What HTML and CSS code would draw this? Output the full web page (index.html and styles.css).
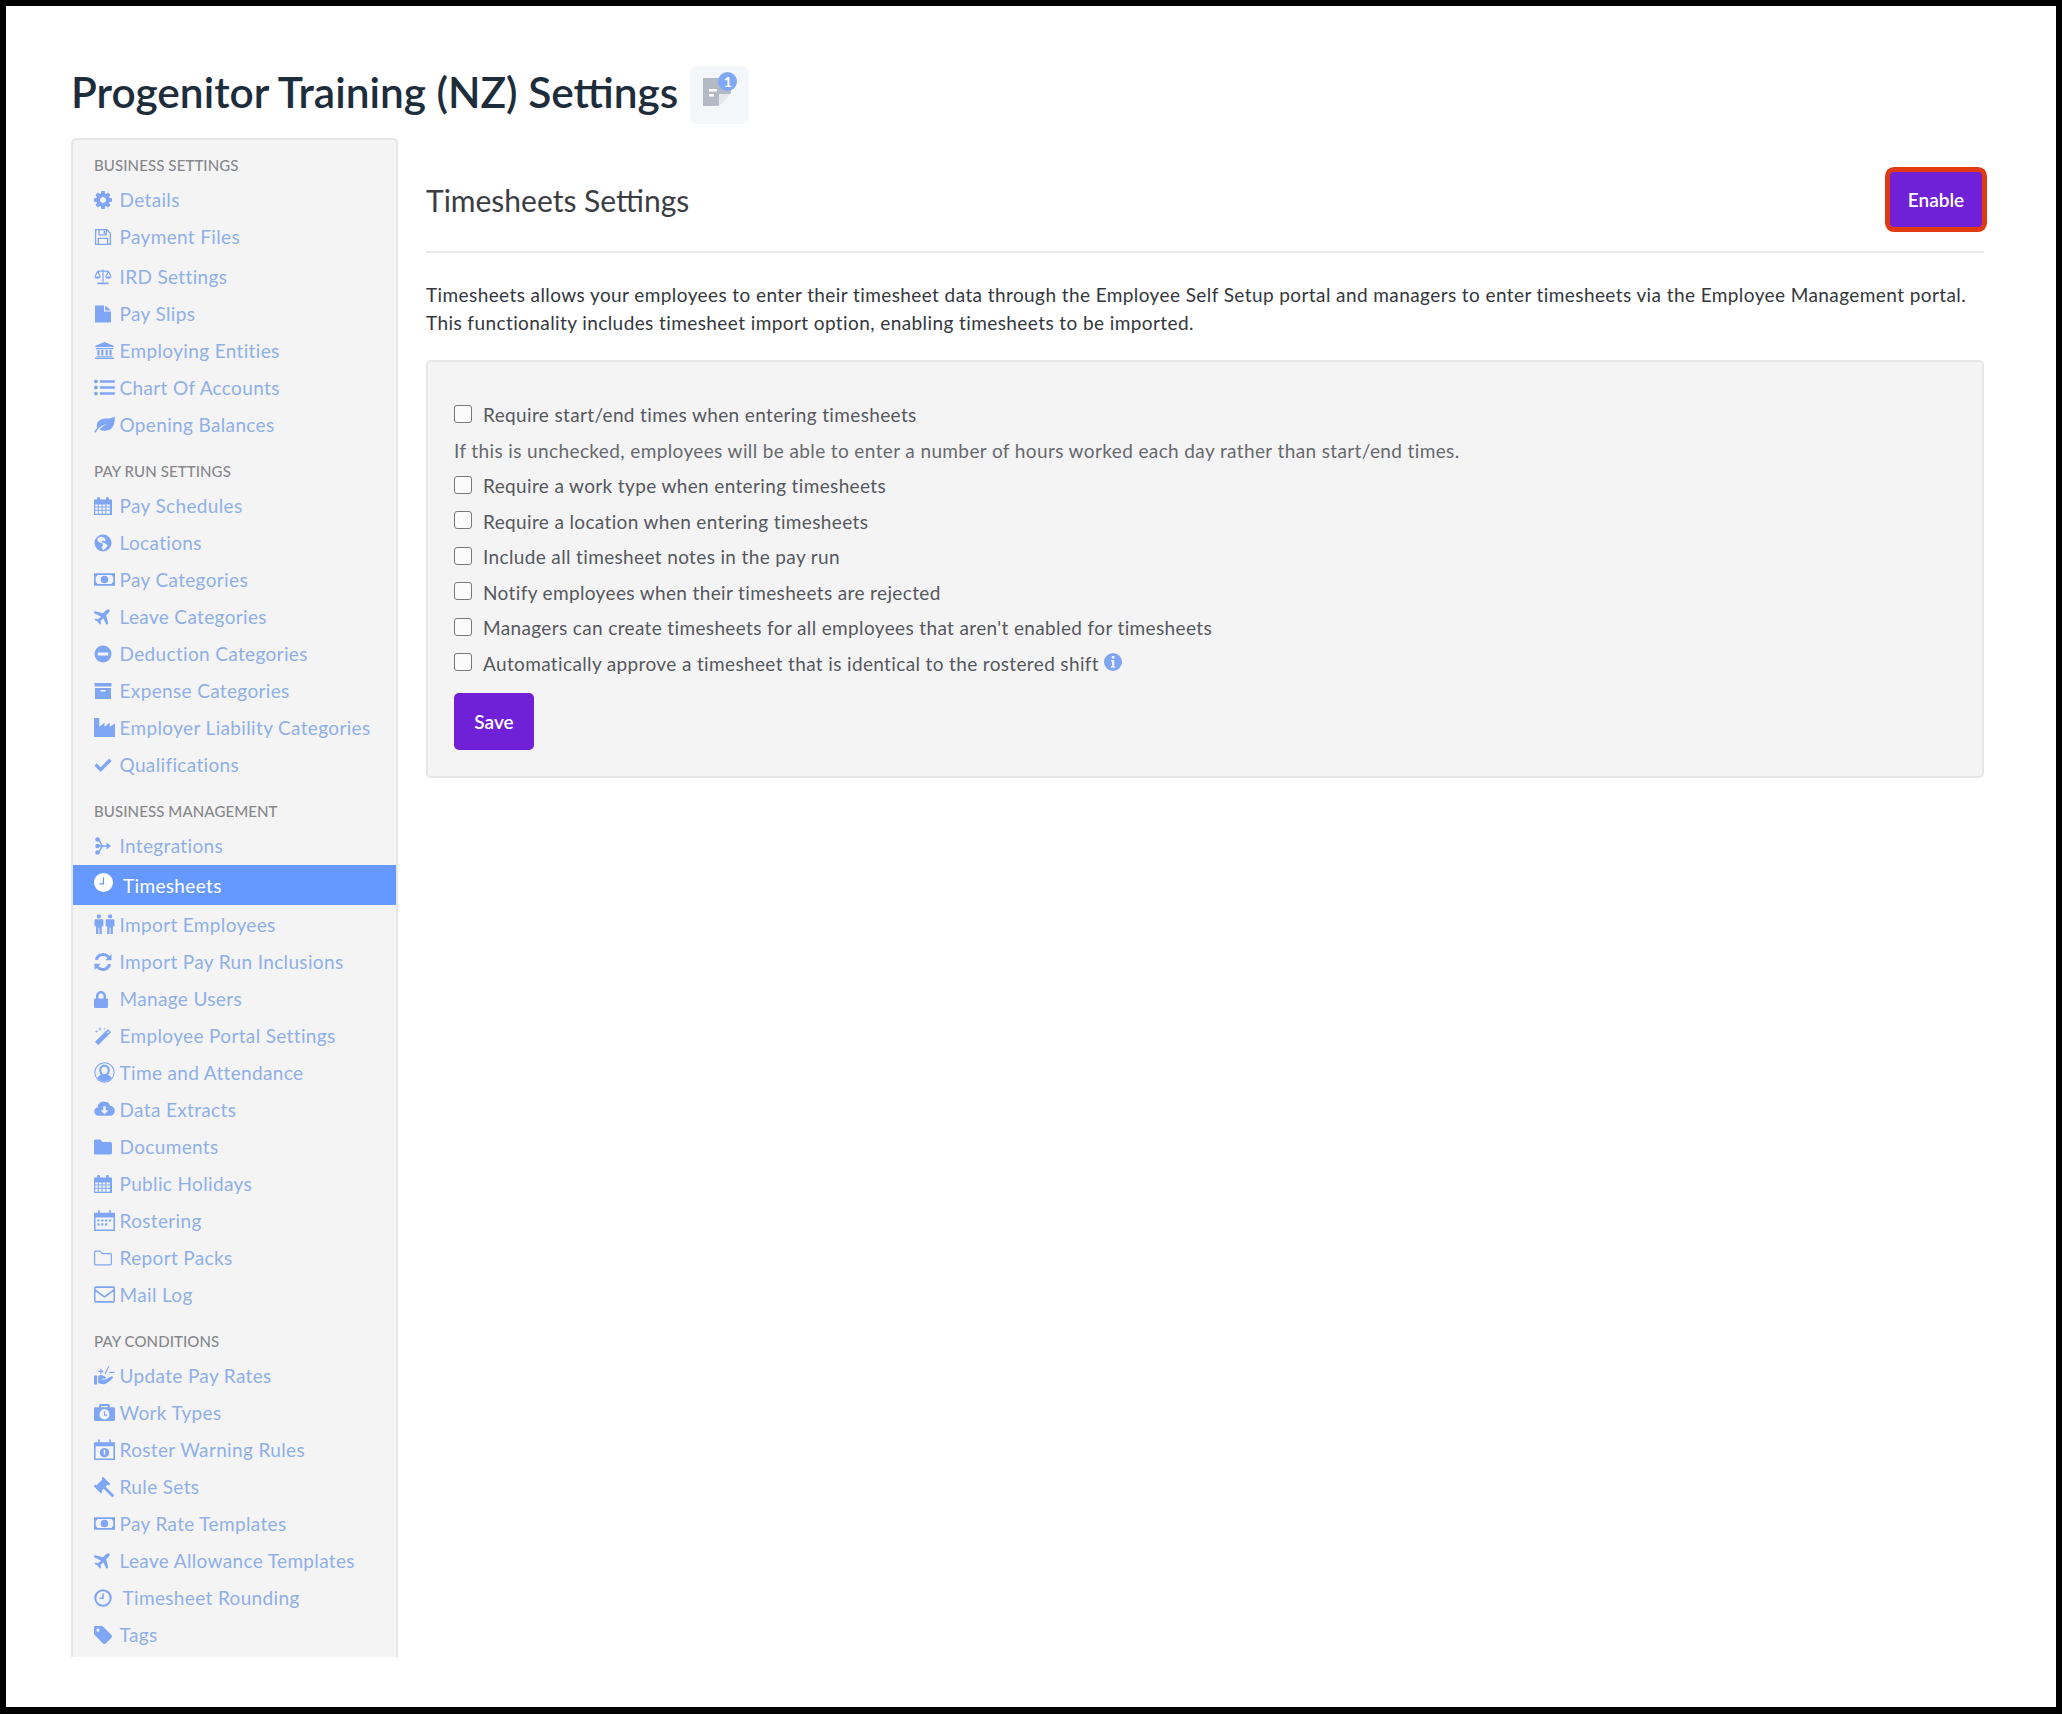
FILE: index.html
```html
<!DOCTYPE html>
<html lang="en">
<head>
<meta charset="utf-8">
<title>Progenitor Training (NZ) Settings</title>
<link rel="stylesheet" href="styles.css">
</head>
<body>
<svg class="defs" width="0" height="0" aria-hidden="true">
  <symbol id="i-gear" viewBox="0 0 1536 1536"><path d="M1024 640q0-106-75-181t-181-75-181 75-75 181 75 181 181 75 181-75 75-181zm512-109v222q0 12-8 23t-20 13l-185 28q-19 54-39 91 35 50 107 138 10 12 10 25t-9 23q-27 37-99 108t-94 71q-12 0-26-9l-138-108q-44 23-91 38-16 136-29 186-7 28-36 28h-222q-14 0-24.5-8.5t-11.5-21.5l-28-184q-49-16-90-37l-141 107q-10 9-25 9-14 0-25-11-126-114-165-168-7-10-7-23 0-12 8-23 15-21 51-66.5t54-70.5q-27-50-41-99l-183-27q-13-2-21-12.5t-8-23.5v-222q0-12 8-23t19-13l186-28q14-46 39-92-40-57-107-138-10-12-10-24 0-10 9-23 26-36 98.5-107.5t94.5-71.5q13 0 26 10l138 107q44-23 91-38 16-136 29-186 7-28 36-28h222q14 0 24.5 8.5t11.5 21.5l28 184q49 16 90 37l142-107q9-9 24-9 13 0 25 10 129 119 165 170 7 8 7 22 0 12-8 23-15 21-51 66.5t-54 70.5q26 50 41 98l183 28q13 2 21 12.5t8 23.5z" transform="translate(0 128)"/></symbol>
  <symbol id="i-save" viewBox="0 0 18 18"><path fill="none" stroke="currentColor" stroke-width="1.3" d="M1.6 1.6h11.2l3.6 3.6v11.2H1.6zM5 1.8v5h7.4v-5M4.4 16.2V10.4h9.2v5.8"/><path d="M9.6 2.4h1.6v3.4H9.6z"/></symbol>
  <symbol id="i-scale" viewBox="0 0 18 18"><path fill="none" stroke="currentColor" stroke-width="1.2" d="M9 1.4v13M3.6 3.2h10.8M3.6 3.2L1 8.6M3.6 3.2l2.6 5.4M14.4 3.2L11.8 8.6M14.4 3.2L17 8.6"/><path d="M.6 8.6h6c0 1.4-1.3 2.2-3 2.2S.6 10 .6 8.6zM11.4 8.6h6c0 1.4-1.3 2.2-3 2.2s-3-.8-3-2.2zM3.4 14.4h11.2v1.8H3.4z"/></symbol>
  <symbol id="i-file" viewBox="0 0 18 18"><path d="M1 .5h9v6h7v11H1zM11.3.5L17 5.4h-5.7z"/></symbol>
  <symbol id="i-bank" viewBox="0 0 22 18"><path d="M11 0l9.5 4v1.4h-19V4zM2 6.4h18v1.2H2zM3.6 8.6h2.2v5.6H3.6zM7.6 8.6h2.2v5.6H7.6zM12.2 8.6h2.2v5.6h-2.2zM16.2 8.6h2.2v5.6h-2.2zM2.6 15h16.8v1.2H2.6zM1 16.6h20V18H1z"/></symbol>
  <symbol id="i-list" viewBox="0 0 20 18"><circle cx="1.8" cy="3.2" r="1.8"/><circle cx="1.8" cy="9" r="1.8"/><circle cx="1.8" cy="14.8" r="1.8"/><path d="M5.6 2h14.2v2.4H5.6zM5.6 7.8h14.2v2.4H5.6zM5.6 13.6h14.2V16H5.6z"/></symbol>
  <symbol id="i-leaf" viewBox="0 0 20 18"><path d="M19.6 1.4c.8 5.6-1 13-8.4 13.6-2.2.2-4.200-.2-5.800-1.400C7 11.200 10 9.400 13.400 8.200 9.400 8.600 5.600 10.600 3.200 14.200L1.400 16.800.2 16c.8-1.400 1.800-2.600 2.800-3.600C1.400 7.200 5.600 3.600 11 3.400c3.400-.1 6.600-.4 8.600-2z"/></symbol>
  <symbol id="i-cal" viewBox="0 0 18 18"><path d="M0 2.600h3.200V1.200A1.200 1.200 0 0 1 4.400 0h.4A1.200 1.200 0 0 1 6 1.200v1.400h6V1.200A1.200 1.200 0 0 1 13.200 0h.4a1.200 1.200 0 0 1 1.200 1.200v1.400H18V18H0zM1.200 7.400v2.200h2.600V7.400zm3.600 0v2.200h2.800V7.400zm3.800 0v2.200h2.800V7.400zm3.800 0v2.200h3.400V7.400zM1.200 10.600v2.200h2.600v-2.200zm3.600 0v2.200h2.800v-2.200zm3.800 0v2.200h2.800v-2.200zm3.800 0v2.200h3.400v-2.200zM1.200 13.800V16.800h2.600v-3zm3.600 0v3h2.800v-3zm3.800 0v3h2.800v-3zm3.800 0v3h3.400v-3z" fill-rule="evenodd"/></symbol>
  <symbol id="i-globe" viewBox="0 0 18 18"><path fill-rule="evenodd" d="M9 .5a8.500 8.500 0 1 1 0 17 8.500 8.500 0 0 1 0-17zM7.500 2.400L4 3.800l-.8 2.800 2.600 2 2.400.4.600 2.600L7.600 14l1.800 2.200 2-1.800 2.400-3-3-2.400-2.600-.6-.8-1.200 2-.6 1.400.8 1-1.600-1.200-1.600z"/></symbol>
  <symbol id="i-money" viewBox="0 0 22 18"><path fill-rule="evenodd" d="M0 2.500h22v13H0zM3.600 4.300A1.800 1.800 0 0 1 1.800 6.100v5.800a1.800 1.800 0 0 1 1.800 1.800h14.800a1.800 1.800 0 0 1 1.800-1.800V6.100a1.800 1.800 0 0 1-1.800-1.800zM11 5a4 4 0 1 1 0 8 4 4 0 0 1 0-8z"/><path d="M10.200 6.500h1.400v4.400h.9v1H9.400v-1h.9V7.700h-1z"/></symbol>
  <symbol id="i-plane" viewBox="0 0 18 18"><path d="M17.200.8c.8.800.5 2.200-.4 3.100l-3.100 3.100 2.200 8.700c.1.300 0 .5-.2.700l-1 1c-.3.300-.8.200-1-.2L10.400 10.300 7.300 13.400l.6 2.700c0 .2 0 .4-.2.500l-.7.700c-.3.300-.7.200-.9-.1L4.400 14.400 1 12.700c-.4-.2-.4-.6-.1-.9l.7-.7c.1-.2.300-.2.500-.2l2.700.6 3.100-3.100L-.1 4.700c-.4-.2-.5-.7-.2-1l1-1c.2-.2.400-.3.700-.2l8.700 2.200 3.100-3.100c.9-.9 3.200-1.600 4-.8z"/></symbol>
  <symbol id="i-minus" viewBox="0 0 18 18"><path fill-rule="evenodd" d="M9 .5a8.500 8.500 0 1 1 0 17 8.500 8.500 0 0 1 0-17zM3.800 7.500v3h10.400v-3z"/></symbol>
  <symbol id="i-archive" viewBox="0 0 18 18"><path fill-rule="evenodd" d="M.5 1h17v3.600H.5zM1 6h16v11H1zM6.500 8v1.600h5V8z"/></symbol>
  <symbol id="i-industry" viewBox="0 0 20 18"><path d="M0 0h5v8.400l5-4v4l5-4v4l5-3.200V18H0z"/></symbol>
  <symbol id="i-check" viewBox="0 0 18 18"><path fill="none" stroke="currentColor" stroke-width="3.400" stroke-linejoin="miter" d="M1.600 8.600l5 5L16.400 3.800"/></symbol>
  <symbol id="i-integ" viewBox="0 0 18 20"><circle cx="3" cy="2.800" r="2.600"/><circle cx="3" cy="10" r="2.600"/><circle cx="3" cy="17.200" r="2.600"/><path fill="none" stroke="currentColor" stroke-width="1.500" d="M3 2.800c3.500 0 3 7.200 6.500 7.200H15M3 17.200c3.500 0 3-7.200 6.500-7.200M3 10h7"/><path d="M13 6.200l4.800 3.800-4.800 3.800z"/></symbol>
  <symbol id="i-clock" viewBox="0 0 18 18"><path fill-rule="evenodd" d="M9 0a9 9 0 1 1 0 18A9 9 0 0 1 9 0zM8.300 4v5.700H5v1.200h4.500V4z"/></symbol>
  <symbol id="i-users" viewBox="0 0 20 20"><circle cx="4.700" cy="2.300" r="2"/><circle cx="15.300" cy="2.300" r="2"/><path d="M1.500 5h6.400a1 1 0 0 1 1 1v5.600H7.400V19H5.200v-6H4.200v6H2V11.600H.5V6a1 1 0 0 1 1-1zM12.100 5h6.400a1 1 0 0 1 1 1v5.600H18V19h-2.200v-6h-1v6h-2.200V11.600h-1.500V6a1 1 0 0 1 1-1z"/></symbol>
  <symbol id="i-refresh" viewBox="0 0 18 18"><path d="M17.500 1v6.200h-6.200l2.300-2.300A5.700 5.700 0 0 0 3.800 7.200L.9 6.600A8.600 8.600 0 0 1 15.600 2.900zM.5 17v-6.200h6.200l-2.300 2.300a5.700 5.700 0 0 0 9.800-2.300l2.900.6A8.600 8.600 0 0 1 2.400 15.100z"/></symbol>
  <symbol id="i-lock" viewBox="0 0 14 18"><path fill-rule="evenodd" d="M7 1a5 5 0 0 1 5 5v2.500h1a1 1 0 0 1 1 1V17a1 1 0 0 1-1 1H1a1 1 0 0 1-1-1V9.500a1 1 0 0 1 1-1h1V6a5 5 0 0 1 5-5zM7 3.500A2.500 2.500 0 0 0 4.500 6v2.500h5V6A2.500 2.500 0 0 0 7 3.500z"/></symbol>
  <symbol id="i-wand" viewBox="0 0 18 18"><path d="M14 2l3.200 3.200L4.200 18 1 14.800zM12.800 5.400l1 1 1.400-1.400-1-1z"/><path d="M6 0l.5 1.500L8 2l-1.500.5L6 4l-.5-1.500L4 2l1.500-.5zM2.500 3l.4 1.100L4 4.500l-1.100.4L2.500 6l-.4-1.100L1 4.500l1.100-.4zM10.500.5l.3.9.9.3-.9.3-.3.9-.3-.9-.9-.3.9-.3z"/></symbol>
  <symbol id="i-ucircle" viewBox="0 0 20 20"><circle cx="10" cy="10" r="9.200" fill="none" stroke="currentColor" stroke-width="1"/><path d="M10 2.500c3.200 0 5.200 2.500 5 5.500 0 1.700-.7 3.200-1.700 4.300 1.600.6 3 1.600 3.500 2.900a8.600 8.600 0 0 1-13.600 0c.5-1.300 1.900-2.300 3.500-2.900C5.700 11.200 5 9.700 5 8c-.2-3 1.800-5.500 5-5.500z"/><path d="M10 4.500c-2 0-3.200 1.500-3 3.500.1 2 1.300 3.700 3 3.700s2.900-1.700 3-3.700c.2-2-1-3.500-3-3.500z" fill="#f4f4f5"/></symbol>
  <symbol id="i-cloud" viewBox="0 0 22 18"><path fill-rule="evenodd" d="M11.500 1a5.500 5.500 0 0 1 5.300 4c2.800.2 5 2.300 5 5.200 0 3-2.300 5.300-5.300 5.300H4.500A4.400 4.400 0 0 1 3.800 6.800 6 6 0 0 1 11.500 1zM9.700 5.500v4.300H6.900l4.100 4.200 4.100-4.200h-2.800V5.500z"/></symbol>
  <symbol id="i-folder" viewBox="0 0 18 18"><path d="M1.500 1.500h5L8.500 4H16.500A1.500 1.500 0 0 1 18 5.500v9.500A1.500 1.500 0 0 1 16.500 16.500h-15A1.500 1.500 0 0 1 0 15V3A1.500 1.500 0 0 1 1.500 1.500z"/></symbol>
  <symbol id="i-folder-o" viewBox="0 0 18 18"><path fill="none" stroke="currentColor" stroke-width="1.200" d="M1.800 2.100h4.500l2 2.500h7.900a1.200 1.200 0 0 1 1.200 1.200v8.900a1.200 1.200 0 0 1-1.200 1.200H1.800a1.200 1.200 0 0 1-1.200-1.200V3.300a1.200 1.200 0 0 1 1.200-1.200z"/></symbol>
  <symbol id="i-mail" viewBox="0 0 20 18"><path fill="none" stroke="currentColor" stroke-width="1.500" d="M1.700 2h16.600a1 1 0 0 1 1 1v12a1 1 0 0 1-1 1H1.700a1 1 0 0 1-1-1V3a1 1 0 0 1 1-1zM.8 4.400c3 2.400 6.200 5 9.200 6.800 3-1.800 6.200-4.400 9.200-6.800"/></symbol>
  <symbol id="i-roster" viewBox="0 0 19 19"><path fill-rule="evenodd" d="M0 2.500h3.800V0h1.400v2.500h8.600V0h1.400v2.500H19V19H0zM1.400 6.800v10.800h16.200V6.800z"/><path d="M3 8.500h2v2H3zM6.500 8.500h2v2h-2zM10 8.500h2v2h-2zM13.500 8.500h2v2h-2zM3 12h2v2H3zM6.500 12h2v2h-2zM10 12h2v2h-2z"/></symbol>
  <symbol id="i-hand" viewBox="0 0 20 19"><path d="M0 9.500h3v8.500H0zM4 10c1.600-1 3.200-1.200 4.500-.4l2.300 1.100c1 .5.700 1.900-.5 1.900H7.500v.8h3.600l5.200-3c1.100-.6 2.400.6 1.400 1.700-1.700 1.700-4 4-6.700 5.200-2.300 1-5 .2-7-.6z"/><path fill="none" stroke="currentColor" stroke-width="1.100" d="M6.600 3v5M4.100 5.500h5M10.600 8L14 .8M14.500 6.500h5"/></symbol>
  <symbol id="i-case" viewBox="0 0 20 18"><path fill-rule="evenodd" d="M6 1h8a1 1 0 0 1 1 1v2h4a1 1 0 0 1 1 1v11a1 1 0 0 1-1 1H1a1 1 0 0 1-1-1V5a1 1 0 0 1 1-1h4V2a1 1 0 0 1 1-1zM6.800 2.700V4h6.400V2.700zM10 6a4.800 4.800 0 1 0 0 9.600A4.800 4.800 0 0 0 10 6z"/><path d="M9.400 7.800h1.200v3.200h2v1.200H9.400z"/></symbol>
  <symbol id="i-calert" viewBox="0 0 20 20"><path fill-rule="evenodd" d="M0 3h4V.5h1.500V3h9V.5H16V3h4v17H0zM1.500 7v11.500h17V7z"/><path fill-rule="evenodd" d="M10 8.500a4.500 4.500 0 1 1 0 9 4.500 4.500 0 0 1 0-9zM9.300 10.200v4.600h1.400v-4.600z"/></symbol>
  <symbol id="i-gavel" viewBox="0 0 19 19"><path d="M8.200.6l6.600 6.600-1.500 1.500-.9-.9-1.900 1.900 7.100 7.100c.5.500.5 1.300 0 1.800-.5.500-1.300.5-1.800 0L8.700 11.500 6.900 13.400l.9.900-1.500 1.500L-.300 9.200l1.500-1.500.9.900L7.600 3.100l-.9-.9z"/></symbol>
  <symbol id="i-clock-o" viewBox="0 0 18 18"><circle cx="9" cy="9" r="7.700" fill="none" stroke="currentColor" stroke-width="2"/><path d="M8.300 4.500h1.500v5.500H5.400V8.600h2.900z"/></symbol>
  <symbol id="i-tag" viewBox="0 0 18 18"><path fill-rule="evenodd" d="M1 0h6.500c.6 0 1.100.2 1.500.6l8.400 8.400c.8.800.8 2 0 2.800l-5.600 5.600c-.8.800-2 .8-2.800 0L.6 9C.2 8.600 0 8.100 0 7.500V1a1 1 0 0 1 1-1zm3 2.500a1.600 1.600 0 1 0 0 3.200 1.600 1.600 0 0 0 0-3.200z"/></symbol>
  <symbol id="i-info" viewBox="0 0 18 18"><path fill-rule="evenodd" d="M9 0a9 9 0 1 1 0 18A9 9 0 0 1 9 0zM7.800 3v2.500h2.600V3zM7 7v1.500h1v4.800H7v1.500h4.200v-1.500h-.9V7z"/></symbol>
</svg>
<div class="page">
  <header class="title-row">
    <h1 class="title">Progenitor Training (NZ) Settings</h1>
    <div class="notes">
      <svg class="notes-doc" viewBox="0 0 28 28"><path fill="#b4bac4" d="M0 0h28v15l-13 13H0z"/><path fill="#fff" d="M6 11h8v2.500H6zM6 16h5v2.500H6z"/><path fill="#e4e7ec" d="M16 28V16h12z"/></svg>
      <span class="notes-count">1</span>
    </div>
  </header>
  <div class="layout">
    <nav class="sidebar">
      <div class="nav-head first">Business Settings</div>
      <a class="nav-item"><svg class="ic"><use href="#i-gear"/></svg>Details</a>
      <a class="nav-item"><svg class="ic"><use href="#i-save"/></svg>Payment Files</a>
      <a class="nav-item drop3"><svg class="ic"><use href="#i-scale"/></svg>IRD Settings</a>
      <a class="nav-item"><svg class="ic"><use href="#i-file"/></svg>Pay Slips</a>
      <a class="nav-item"><svg class="ic wide"><use href="#i-bank"/></svg>Employing Entities</a>
      <a class="nav-item"><svg class="ic wide"><use href="#i-list"/></svg>Chart Of Accounts</a>
      <a class="nav-item"><svg class="ic wide"><use href="#i-leaf"/></svg>Opening Balances</a>
      <div class="nav-head">Pay Run Settings</div>
      <a class="nav-item"><svg class="ic"><use href="#i-cal"/></svg>Pay Schedules</a>
      <a class="nav-item"><svg class="ic"><use href="#i-globe"/></svg>Locations</a>
      <a class="nav-item"><svg class="ic wide"><use href="#i-money"/></svg>Pay Categories</a>
      <a class="nav-item"><svg class="ic plane"><use href="#i-plane"/></svg>Leave Categories</a>
      <a class="nav-item"><svg class="ic"><use href="#i-minus"/></svg>Deduction Categories</a>
      <a class="nav-item"><svg class="ic"><use href="#i-archive"/></svg>Expense Categories</a>
      <a class="nav-item"><svg class="ic wide"><use href="#i-industry"/></svg>Employer Liability Categories</a>
      <a class="nav-item"><svg class="ic"><use href="#i-check"/></svg>Qualifications</a>
      <div class="nav-head">Business Management</div>
      <a class="nav-item"><svg class="ic"><use href="#i-integ"/></svg>Integrations</a>
      <a class="nav-item active"><svg class="ic"><use href="#i-clock"/></svg>Timesheets</a>
      <a class="nav-item drop2"><svg class="ic wide"><use href="#i-users"/></svg>Import Employees</a>
      <a class="nav-item"><svg class="ic"><use href="#i-refresh"/></svg>Import Pay Run Inclusions</a>
      <a class="nav-item"><svg class="ic lock"><use href="#i-lock"/></svg>Manage Users</a>
      <a class="nav-item"><svg class="ic"><use href="#i-wand"/></svg>Employee Portal Settings</a>
      <a class="nav-item"><svg class="ic wide"><use href="#i-ucircle"/></svg>Time and Attendance</a>
      <a class="nav-item"><svg class="ic wide"><use href="#i-cloud"/></svg>Data Extracts</a>
      <a class="nav-item"><svg class="ic"><use href="#i-folder"/></svg>Documents</a>
      <a class="nav-item"><svg class="ic"><use href="#i-cal"/></svg>Public Holidays</a>
      <a class="nav-item"><svg class="ic wide"><use href="#i-roster"/></svg>Rostering</a>
      <a class="nav-item"><svg class="ic"><use href="#i-folder-o"/></svg>Report Packs</a>
      <a class="nav-item"><svg class="ic wide"><use href="#i-mail"/></svg>Mail Log</a>
      <div class="nav-head">Pay Conditions</div>
      <a class="nav-item"><svg class="ic wide"><use href="#i-hand"/></svg>Update Pay Rates</a>
      <a class="nav-item"><svg class="ic wide"><use href="#i-case"/></svg>Work Types</a>
      <a class="nav-item"><svg class="ic wide"><use href="#i-calert"/></svg>Roster Warning Rules</a>
      <a class="nav-item"><svg class="ic wide"><use href="#i-gavel"/></svg>Rule Sets</a>
      <a class="nav-item"><svg class="ic wide"><use href="#i-money"/></svg>Pay Rate Templates</a>
      <a class="nav-item"><svg class="ic plane"><use href="#i-plane"/></svg>Leave Allowance Templates</a>
      <a class="nav-item indent"><svg class="ic"><use href="#i-clock-o"/></svg>Timesheet Rounding</a>
      <a class="nav-item"><svg class="ic"><use href="#i-tag"/></svg>Tags</a>
    </nav>
    <main class="main">
      <div class="main-head">
        <h2 class="main-title">Timesheets Settings</h2>
        <button class="btn btn-enable" type="button">Enable</button>
      </div>
      <p class="intro">Timesheets allows your employees to enter their timesheet data through the Employee Self Setup portal and managers to enter timesheets via the Employee Management portal.<br>This functionality includes timesheet import option, enabling timesheets to be imported.</p>
      <form class="panel">
        <label class="check"><input type="checkbox">Require start/end times when entering timesheets</label>
        <p class="help">If this is unchecked, employees will be able to enter a number of hours worked each day rather than start/end times.</p>
        <label class="check"><input type="checkbox">Require a work type when entering timesheets</label>
        <label class="check"><input type="checkbox">Require a location when entering timesheets</label>
        <label class="check"><input type="checkbox">Include all timesheet notes in the pay run</label>
        <label class="check"><input type="checkbox">Notify employees when their timesheets are rejected</label>
        <label class="check"><input type="checkbox">Managers can create timesheets for all employees that aren't enabled for timesheets</label>
        <label class="check"><input type="checkbox">Automatically approve a timesheet that is identical to the rostered shift<svg class="info"><use href="#i-info"/></svg></label>
        <button class="btn btn-save" type="button">Save</button>
      </form>
    </main>
  </div>
</div>
</body>
</html>
```

FILE: styles.css
```css
* { box-sizing: border-box; }
html, body { margin: 0; padding: 0; }
body {
  background: #000;
  padding: 6px;
  width: 2062px;
  height: 1714px;
  font-family: "Lato", "Liberation Sans", sans-serif;
  overflow: hidden;
}
.defs { position: absolute; }
.page {
  background: #fff;
  width: 2050px;
  height: 1701px;
  padding: 60px 72px 0 65px;
  overflow: hidden;
}
.title-row { display: flex; align-items: center; height: 58px; gap: 12px; }
.title {
  margin: 0 0 8px;
  font-size: 42.400px;
  font-weight: 600;
  color: #1d2d3b;
  white-space: nowrap;
}
.notes {
  width: 59px;
  height: 58px;
  background: #f4f7f9;
  border-radius: 7px;
  display: flex;
  padding: 12px 0 0 13px;
  position: relative;
}
.notes-doc { width: 28px; height: 28px; }
.notes-count {
  position: absolute;
  top: 6px;
  left: 28px;
  width: 19px;
  height: 19px;
  border-radius: 50%;
  background: #7fa8f5;
  color: #fff;
  font-size: 14px;
  font-weight: 700;
  line-height: 19px;
  text-align: center;
}
.layout { display: flex; margin-top: 14px; gap: 28px; align-items: flex-start; }
.sidebar {
  width: 327px;
  height: 1519px;
  overflow: hidden;
  flex: none;
  background: #f4f4f5;
  border: 2px solid #e6e6e6;
  border-bottom: 0;
  border-radius: 5px 5px 0 0;
}
.nav-head {
  height: 26px;
  line-height: 26px;
  margin: 14px 0 4px;
  padding-left: 21px;
  font-size: 15px;
  font-weight: 500;
  letter-spacing: 0.100px;
  color: #86888c;
  text-transform: uppercase;
  white-space: nowrap;
}
.nav-head.first { margin-top: 12px; }
.nav-item {
  display: flex;
  align-items: center;
  height: 37px;
  padding: 0 0 2px 21px;
  font-size: 19px;
  letter-spacing: 0.350px;
  color: #8fb0e6;
  white-space: nowrap;
}
.drop3 { height: 40px; padding-top: 3px; }
.drop2 { height: 39px; padding-top: 2px; }
.ic {
  width: 18px;
  height: 18px;
  flex: none;
  margin-right: 7.500px;
  fill: #7ea6f5;
  color: #7ea6f5;
  overflow: visible;
}
.ic.wide { width: 21px; height: 21px; margin-right: 4.500px; }
.ic.plane { width: 16px; height: 16px; margin-right: 9.500px; }
.ic.lock { width: 14px; margin-right: 11.500px; }
.indent .ic { margin-right: 10.500px; }
.active {
  height: 40px;
  padding-bottom: 0;
  background: #6699ff;
  color: #fff;
}
.active .ic { width: 19px; height: 19px; margin-right: 10px; fill: #fff; color: #fff; margin-top: -5px; }
.main { flex: 1; min-width: 0; }
.main-head {
  display: flex;
  justify-content: space-between;
  align-items: center;
  height: 115px;
  padding: 10px 2px 0 0;
  border-bottom: 2px solid #e8e8e8;
}
.main-title {
  margin: 0;
  font-size: 30px;
  font-weight: 400;
  color: #3a3d42;
}
.btn {
  border: 0;
  background: #7020d6;
  color: #fff;
  font-family: inherit;
  font-size: 19px;
  font-weight: 600;
  border-radius: 5px;
}
.btn-enable {
  width: 92px;
  height: 55px;
  box-shadow: 0 0 0 5px #e03a10;
  border-radius: 4px;
}
.intro {
  margin: 28px 0 0;
  font-size: 19px;
  letter-spacing: 0.410px;
  line-height: 28px;
  color: #33373c;
  white-space: nowrap;
}
.panel {
  margin-top: 23px;
  height: 418px;
  background: #f4f4f5;
  border: 2px solid #e6e6e6;
  border-radius: 5px;
  padding: 35px 26px 0;
}
.check, .help {
  display: flex;
  align-items: center;
  height: 35.500px;
  margin: 0;
  font-size: 19px;
  letter-spacing: 0.360px;
  color: #55585d;
  white-space: nowrap;
}
.help { color: #66696e; letter-spacing: 0.380px; }
.check input {
  appearance: none;
  width: 18px;
  height: 18px;
  margin: 0 11px 2px 0;
  background: #fbfbfb;
  border: 1.500px solid #76787c;
  border-radius: 3px;
  flex: none;
}
.info { width: 18px; height: 18px; margin: 0 0 2px 5px; fill: #7ea6f5; }
.btn-save { display: block; width: 80px; height: 57px; margin-top: 12px; }
```
